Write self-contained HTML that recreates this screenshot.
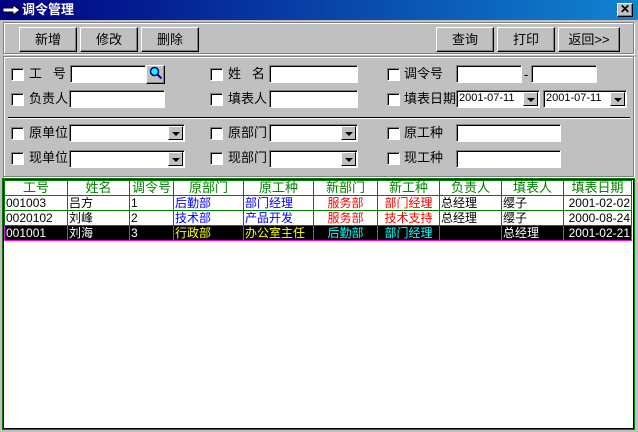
<!DOCTYPE html>
<html><head><meta charset="utf-8"><style>
*{margin:0;padding:0;box-sizing:border-box}
body{width:638px;height:432px;background:#c0c0c0;position:relative;overflow:hidden;font:12px "Liberation Sans","Noto Sans CJK SC","WenQuanYi Zen Hei",sans-serif;color:#000}
.a{position:absolute}
.title{left:0;top:0;width:638px;height:20px;background:linear-gradient(90deg,#000080,#1084d0);color:#fff;font-weight:bold;font-size:13px;line-height:20px;padding-left:22px}
.panel{border:1px solid #808080;box-shadow:inset 1px 1px 0 #fff,1px 1px 0 #fff}
.btn{height:25px;background:#c0c0c0;border:1px solid;border-color:#fff #000 #000 #fff;box-shadow:inset -1px -1px 0 #808080;text-align:center;line-height:23px;font-size:13px}
.cb{width:13px;height:13px;background:#fff;border:1px solid;border-color:#808080 #fff #fff #808080;box-shadow:inset 1px 1px 0 #000}
.lb{font-size:13px;line-height:16px}
.in{height:18px;background:#fff;border:1px solid;border-color:#808080 #fff #fff #808080;box-shadow:inset 1px 1px 0 #000;font-size:11px;line-height:15px;padding-left:2px}
.dd{position:absolute;right:1px;top:1px;width:15px;height:14px;background:#c0c0c0;border:1px solid;border-color:#fff #000 #000 #fff}
.dd:after{content:"";position:absolute;left:3px;top:5px;border-left:4px solid transparent;border-right:4px solid transparent;border-top:4px solid #000}
table{border-collapse:collapse;position:absolute;left:4px;top:180px;font-size:12px}
td{height:15px;border:1px solid #008000;padding:0 1px;white-space:nowrap;line-height:14px}
tr.h td{color:#008000;text-align:center;font-size:13px}
tr.s td{background:#000;color:#fff;border-color:#ff00ff}
</style></head><body>
<div class="a title">调令管理</div>
<svg class="a" style="left:3px;top:5px" width="18" height="10"><path d="M0 3h10V0l7 5-7 5V7H0z" fill="#fff" stroke="#000" stroke-width="1"/></svg>
<div class="a btn" style="left:617px;top:3px;width:16px;height:14px;line-height:11px;font-size:12px;font-weight:bold">✕</div>

<div class="a panel" style="left:3px;top:22px;width:631px;height:32px"></div>
<div class="a btn" style="left:19px;top:27px;width:58px">新增</div>
<div class="a btn" style="left:80px;top:27px;width:58px">修改</div>
<div class="a btn" style="left:141px;top:27px;width:58px">删除</div>
<div class="a btn" style="left:436px;top:27px;width:58px">查询</div>
<div class="a btn" style="left:497px;top:27px;width:58px">打印</div>
<div class="a btn" style="left:558px;top:27px;width:62px">返回&gt;&gt;</div>

<div class="a panel" style="left:3px;top:56px;width:631px;height:121px"></div>
<div class="a" style="left:8px;top:117px;width:622px;height:2px;border-top:1px solid #000;border-bottom:1px solid #fff"></div>

<div class="a cb" style="left:11px;top:68px"></div><div class="a lb" style="left:29px;top:66px">工&nbsp;&nbsp;&nbsp;号</div>
<div class="a in" style="left:70px;top:65px;width:76px"></div>
<div class="a btn" style="left:146px;top:65px;width:19px;height:19px;line-height:16px"><svg width="14" height="14"><circle cx="5.5" cy="5.5" r="4" fill="#0ff" stroke="#000080" stroke-width="1.5"/><path d="M8.5 8.5l4 4" stroke="#000080" stroke-width="2"/></svg></div>
<div class="a cb" style="left:210px;top:68px"></div><div class="a lb" style="left:228px;top:66px">姓&nbsp;&nbsp;&nbsp;名</div>
<div class="a in" style="left:269px;top:65px;width:89px"></div>
<div class="a cb" style="left:387px;top:68px"></div><div class="a lb" style="left:404px;top:66px">调令号</div>
<div class="a in" style="left:456px;top:65px;width:66px"></div>
<div class="a lb" style="left:524px;top:67px">-</div>
<div class="a in" style="left:531px;top:65px;width:66px"></div>

<div class="a cb" style="left:11px;top:93px"></div><div class="a lb" style="left:29px;top:91px">负责人</div>
<div class="a in" style="left:69px;top:90px;width:96px"></div>
<div class="a cb" style="left:210px;top:93px"></div><div class="a lb" style="left:228px;top:91px">填表人</div>
<div class="a in" style="left:269px;top:90px;width:89px"></div>
<div class="a cb" style="left:387px;top:93px"></div><div class="a lb" style="left:404px;top:91px">填表日期</div>
<div class="a in" style="left:456px;top:90px;width:84px">2001-07-11<div class="dd"></div></div>
<div class="a in" style="left:543px;top:90px;width:84px">2001-07-11<div class="dd"></div></div>

<div class="a cb" style="left:11px;top:127px"></div><div class="a lb" style="left:29px;top:125px">原单位</div>
<div class="a in" style="left:69px;top:124px;width:116px"><div class="dd"></div></div>
<div class="a cb" style="left:210px;top:127px"></div><div class="a lb" style="left:228px;top:125px">原部门</div>
<div class="a in" style="left:269px;top:124px;width:89px"><div class="dd"></div></div>
<div class="a cb" style="left:387px;top:127px"></div><div class="a lb" style="left:404px;top:125px">原工种</div>
<div class="a in" style="left:456px;top:124px;width:105px"></div>

<div class="a cb" style="left:11px;top:152px"></div><div class="a lb" style="left:29px;top:150px">现单位</div>
<div class="a in" style="left:69px;top:150px;width:116px"><div class="dd"></div></div>
<div class="a cb" style="left:210px;top:152px"></div><div class="a lb" style="left:228px;top:150px">现部门</div>
<div class="a in" style="left:269px;top:150px;width:89px"><div class="dd"></div></div>
<div class="a cb" style="left:387px;top:152px"></div><div class="a lb" style="left:404px;top:150px">现工种</div>
<div class="a in" style="left:456px;top:150px;width:105px"></div>

<div class="a" style="left:2px;top:178px;width:633px;height:252px;background:#fff;border:1px solid #008000;box-shadow:inset 1px 1px 0 #000,inset -1px -1px 0 #000"></div>
<table>
<colgroup><col style="width:63px"><col style="width:62px"><col style="width:44px"><col style="width:70px"><col style="width:70px"><col style="width:64px"><col style="width:62px"><col style="width:62px"><col style="width:62px"><col style="width:68px"></colgroup>
<tr class="h"><td>工号</td><td>姓名</td><td>调令号</td><td>原部门</td><td>原工种</td><td>新部门</td><td>新工种</td><td>负责人</td><td>填表人</td><td>填表日期</td></tr>
<tr><td>001003</td><td>吕方</td><td>1</td><td style="color:#00f">后勤部</td><td style="color:#00f">部门经理</td><td style="color:#f00;text-align:center">服务部</td><td style="color:#f00;text-align:center">部门经理</td><td>总经理</td><td>缨子</td><td style="text-align:right">2001-02-02</td></tr>
<tr><td>0020102</td><td>刘峰</td><td>2</td><td style="color:#00f">技术部</td><td style="color:#00f">产品开发</td><td style="color:#f00;text-align:center">服务部</td><td style="color:#f00;text-align:center">技术支持</td><td>总经理</td><td>缨子</td><td style="text-align:right">2000-08-24</td></tr>
<tr class="s"><td>001001</td><td>刘海</td><td>3</td><td style="color:#ff0">行政部</td><td style="color:#ff0">办公室主任</td><td style="color:#0ff;text-align:center">后勤部</td><td style="color:#0ff;text-align:center">部门经理</td><td></td><td>总经理</td><td style="text-align:right">2001-02-21</td></tr>
</table>
</body></html>
